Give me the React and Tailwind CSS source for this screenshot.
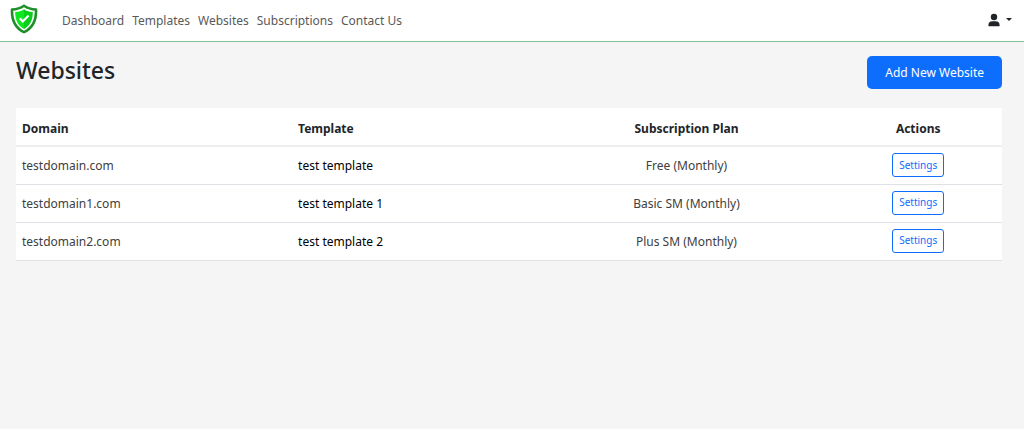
import { useState } from 'react';

const navLinks = ['Dashboard', 'Templates', 'Websites', 'Subscriptions', 'Contact Us'];

const websites = [
  { id: 1, domain: 'testdomain.com', template: 'test template', plan: 'Free (Monthly)' },
  { id: 2, domain: 'testdomain1.com', template: 'test template 1', plan: 'Basic SM (Monthly)' },
  { id: 3, domain: 'testdomain2.com', template: 'test template 2', plan: 'Plus SM (Monthly)' },
];

const Logo = () => (
  <svg viewBox="0 0 28 30" className="w-7 h-[30px]" aria-hidden="true">
    <path
      d="M14 1.8C10.6 4.2 6.6 5.4 2 5.5C1.6 15.5 4.4 23.6 14 28.2C23.6 23.6 26.4 15.5 26 5.5C21.4 5.4 17.4 4.2 14 1.8Z"
      fill="#fff"
      stroke="#1f8f2b"
      strokeWidth="2.6"
      strokeLinejoin="round"
    />
    <path
      d="M14 5.2C11.6 6.9 8.6 7.9 5.2 8.1C5.1 15.8 7.6 21.6 14 25Z"
      fill="#0fe81f"
    />
    <path
      d="M14 5.2C16.4 6.9 19.4 7.9 22.8 8.1C22.9 15.8 20.4 21.6 14 25Z"
      fill="#08cf18"
    />
    <path d="M9.8 14.4L12.8 17.4L18.6 11.4" fill="none" stroke="#fff" strokeWidth="2.2" />
  </svg>
);

const UserIcon = () => (
  <svg viewBox="0 0 12 14" className="w-3 h-3.5" fill="#212529" aria-hidden="true">
    <circle cx="6" cy="4" r="3.2" />
    <path d="M4.4 8.2h3.2A4 4 0 0 1 11.6 12.2V12.7a.6.6 0 0 1-.6.6H1a.6.6 0 0 1-.6-.6V12.2A4 4 0 0 1 4.4 8.2Z" />
  </svg>
);

const Navbar = () => {
  const [open, setOpen] = useState(false);

  return (
    <header className="flex items-center justify-between pl-2.5 pr-3 h-[42px] bg-white border-b border-[#7cc293]">
      <div className="flex items-center gap-6">
        <a href="#home" aria-label="Home" className="pb-1">
          <Logo />
        </a>
        <nav className="flex gap-2 text-[#595959]">
          {navLinks.map((link) => (
            <a key={link} href={`#${link}`}>
              {link}
            </a>
          ))}
        </nav>
      </div>
      <button
        type="button"
        aria-label="Account"
        aria-expanded={open}
        onClick={() => setOpen(!open)}
        className="flex items-center gap-1.5 pb-0.5"
      >
        <UserIcon />
        <svg viewBox="0 0 6 3" className="w-1.5 h-[3px]" fill="#212529" aria-hidden="true">
          <path d="M0 0H6L3 3Z" />
        </svg>
      </button>
    </header>
  );
};

const App = () => (
  <div className="min-h-screen bg-[#f5f5f5] font-['Noto_Sans','Open_Sans',sans-serif] text-xs text-[#212529]">
    <Navbar />
    <main className="pl-4 pr-[22px] pt-3.5">
      <div className="flex items-start justify-between mb-[19px]">
        <h1 className="text-[23px] leading-7 font-medium">Websites</h1>
        <button type="button" className="h-[33px] px-[18px] rounded-[5px] bg-[#0d6efd] text-white">
          Add New Website
        </button>
      </div>

      <table className="w-full table-fixed bg-white">
        <thead>
          <tr className="h-[38px] border-b-2 border-[#edeef0] text-left">
            <th className="w-[28%] px-1.5 pt-1">Domain</th>
            <th className="w-[25%] px-1.5 pt-1">Template</th>
            <th className="w-[30%] px-1.5 pt-1 text-center">Subscription Plan</th>
            <th className="w-[17%] px-1.5 pt-1 text-center">Actions</th>
          </tr>
        </thead>
        <tbody>
          {websites.map((site) => (
            <tr key={site.id} className="h-[38px] border-b border-[#dee2e6]">
              <td className="px-1.5 pt-0.5 text-[#404040]">{site.domain}</td>
              <td className="px-1.5 pt-0.5 text-black">{site.template}</td>
              <td className="px-1.5 pt-0.5 text-center text-[#404040]">{site.plan}</td>
              <td className="px-1.5 text-center">
                <button
                  type="button"
                  className="h-6 px-1.5 rounded-[3px] border border-[#0d6efd] text-[10px] text-[#0d6efd]"
                >
                  Settings
                </button>
              </td>
            </tr>
          ))}
        </tbody>
      </table>
    </main>
  </div>
);

export default App;
